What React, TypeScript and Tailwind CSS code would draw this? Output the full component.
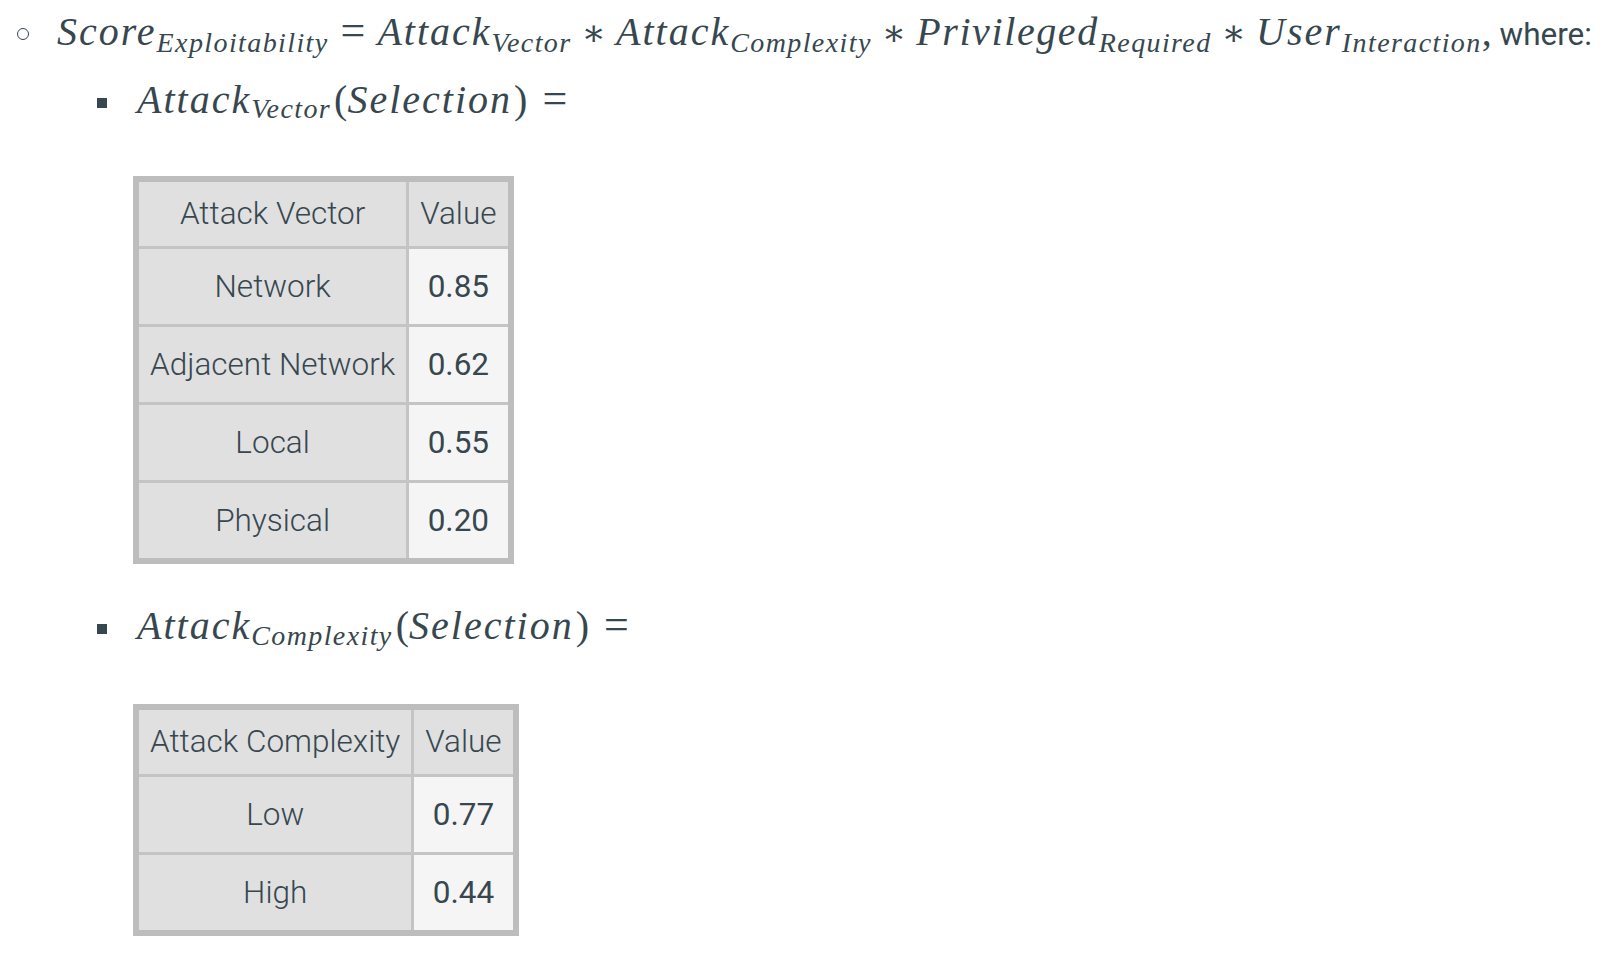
import React from "react";

const mathFont = "font-['Liberation_Serif','DejaVu_Serif',serif]";

function V({ children, cls = "tracking-[0.05em]" }: { children: React.ReactNode; cls?: string }) {
  return <span className={`${mathFont} italic text-[40px] leading-none ${cls}`}>{children}</span>;
}

function Sub({ children, shift }: { children: React.ReactNode; shift: string }) {
  return (
    <span className={`${mathFont} italic text-[28px] leading-none tracking-[0.05em] ${shift}`}>{children}</span>
  );
}

function Op({ children, cls }: { children: React.ReactNode; cls: string }) {
  return <span className={`${mathFont} not-italic leading-none ${cls}`}>{children}</span>;
}

function Table({ head, rows }: { head: [string, string]; rows: [string, string][] }) {
  return (
    <div className="ml-[133px] grid w-fit grid-cols-[auto_auto] gap-[3px] border-[6px] border-[#bdbdbd] bg-[#c4c4c4]">
      <div className="flex h-[64px] items-center justify-center bg-[#e0e0e0] px-[11px] font-light">{head[0]}</div>
      <div className="flex h-[64px] items-center justify-center bg-[#e0e0e0] px-[11px] font-light">{head[1]}</div>
      {rows.map(([a, b]) => (
        <React.Fragment key={a}>
          <div className="flex h-[75px] items-center justify-center bg-[#e0e0e0] px-[11px] font-light">{a}</div>
          <div className="flex h-[75px] items-center justify-center bg-[#f5f5f5] px-[11px] font-normal">{b}</div>
        </React.Fragment>
      ))}
    </div>
  );
}

function Square() {
  return <span className="mr-[30px] inline-block h-[10px] w-[10px] bg-[#37474f] align-[5px]" />;
}

export default function App() {
  return (
    <div className="h-[972px] w-[1612px] overflow-hidden bg-white font-['Roboto','Liberation_Sans',sans-serif] text-[31.5px] text-[#37474f]">
      {/* line 1 */}
      <div className="mt-[5px] h-[60px] whitespace-nowrap pl-[17px] leading-[60px]">
        <span className="mr-[28px] inline-block h-[12px] w-[12px] rounded-full border-[1.5px] border-[#37474f] align-[5px]" />
        <V>Score</V>
        <Sub shift="align-[-7px]">Exploitability</Sub>
        <Op cls="mx-[12px] text-[44px]">=</Op>
        <V>Attack</V>
        <Sub shift="align-[-7px]">Vector</Sub>
        <Op cls="mx-[10px] text-[36px]">∗</Op>
        <V>Attack</V>
        <Sub shift="align-[-7px]">Complexity</Sub>
        <Op cls="mx-[10px] text-[36px]">∗</Op>
        <V cls="tracking-[0.04em]">Privileged</V>
        <Sub shift="align-[-7px]">Required</Sub>
        <Op cls="mx-[10px] text-[36px]">∗</Op>
        <V>User</V>
        <Sub shift="align-[-7px]">Interaction</Sub>
        <Op cls="text-[40px]">,</Op>
        <span> where:</span>
      </div>

      {/* line 2 */}
      <div className="mt-[8px] h-[60px] whitespace-nowrap pl-[97px] leading-[60px]">
        <Square />
        <V>Attack</V>
        <Sub shift="align-[-5px]">Vector</Sub>
        <Op cls="ml-[3px] text-[40px]">(</Op>
        <V>Selection</V>
        <Op cls="ml-[2px] text-[40px]">)</Op>
        <Op cls="ml-[15px] text-[44px]">=</Op>
      </div>

      <div className="mt-[43px]">
        <Table
          head={["Attack Vector", "Value"]}
          rows={[
            ["Network", "0.85"],
            ["Adjacent Network", "0.62"],
            ["Local", "0.55"],
            ["Physical", "0.20"],
          ]}
        />
      </div>

      {/* line 3 */}
      <div className="mt-[35px] h-[60px] whitespace-nowrap pl-[97px] leading-[60px]">
        <Square />
        <V>Attack</V>
        <Sub shift="align-[-6px]">Complexity</Sub>
        <Op cls="ml-[3px] text-[40px]">(</Op>
        <V>Selection</V>
        <Op cls="ml-[2px] text-[40px]">)</Op>
        <Op cls="ml-[15px] text-[44px]">=</Op>
      </div>

      <div className="mt-[45px]">
        <Table
          head={["Attack Complexity", "Value"]}
          rows={[
            ["Low", "0.77"],
            ["High", "0.44"],
          ]}
        />
      </div>
    </div>
  );
}
